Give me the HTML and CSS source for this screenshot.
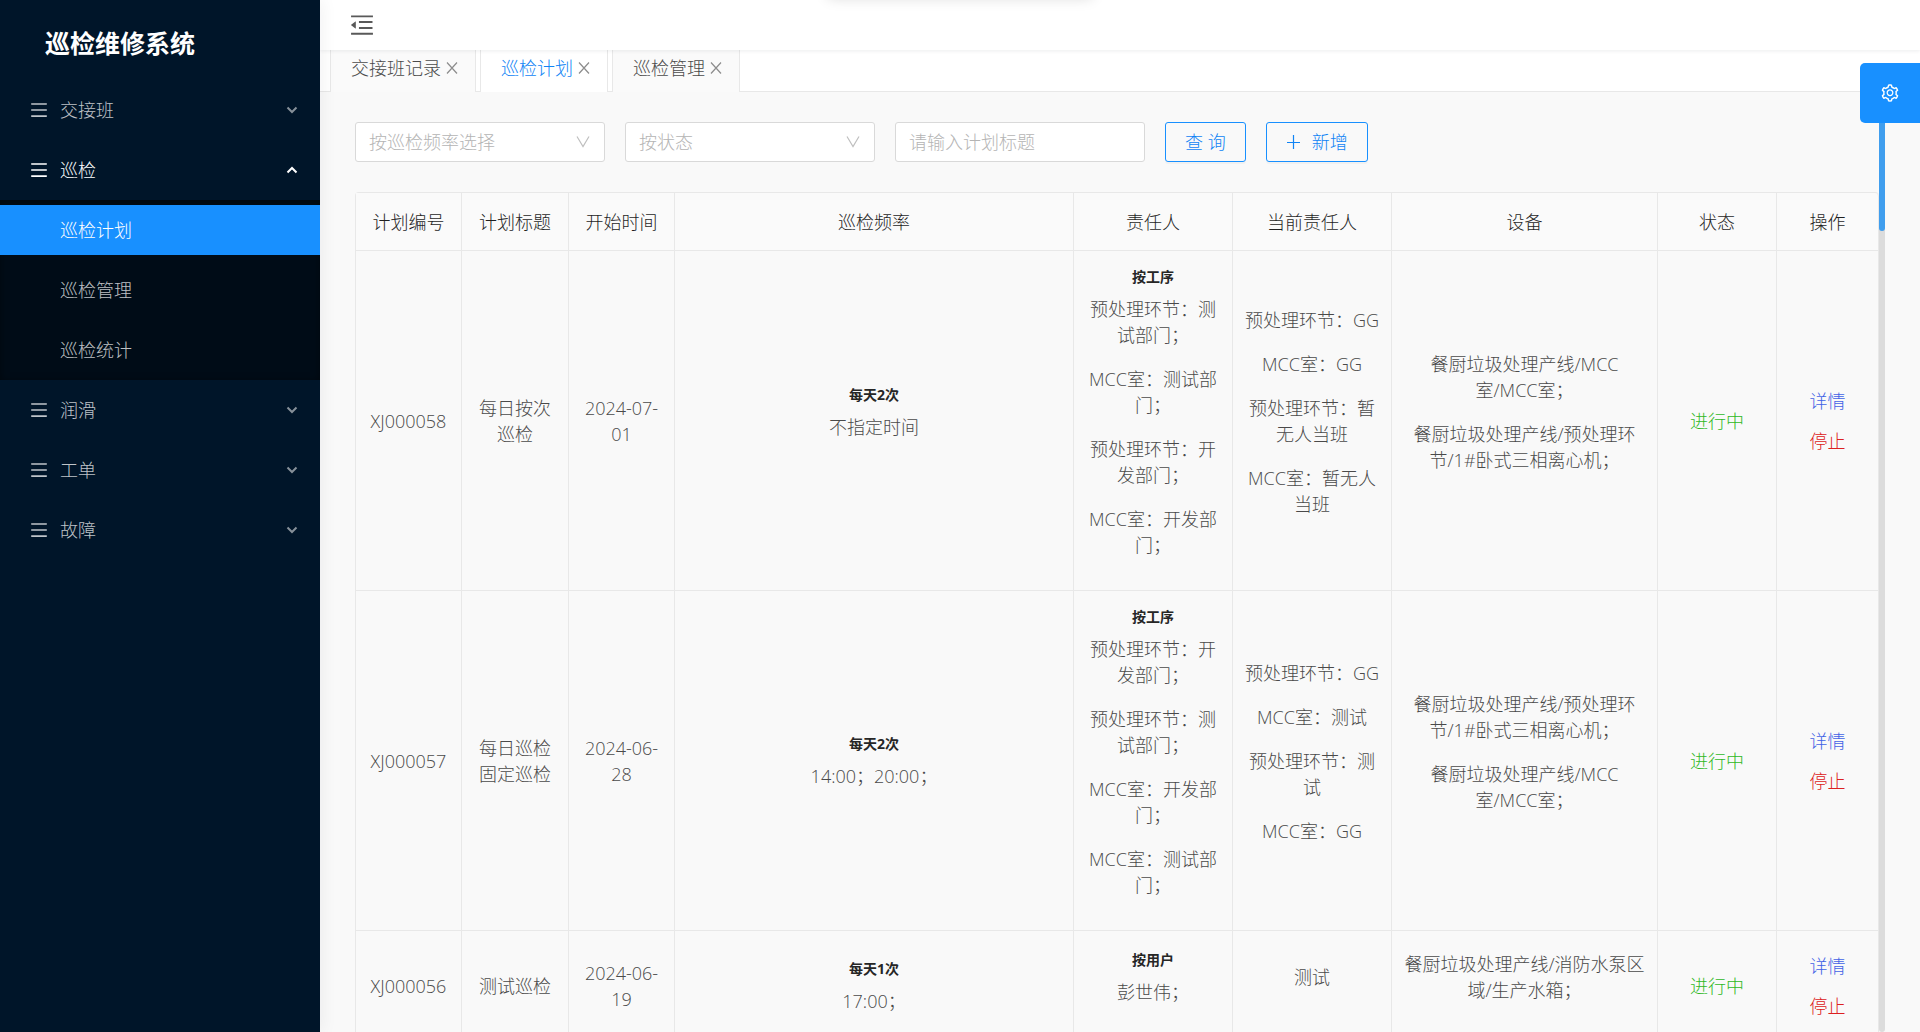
FILE: index.html
```html
<!DOCTYPE html>
<html lang="zh-CN">
<head>
    <meta charset="UTF-8">
    <meta name="viewport" content="width=device-width, initial-scale=1.0">
    <title>巡检维修系统</title>
    <link rel="stylesheet" href="styles.css">
</head>
<body>
    <svg class="sprite" aria-hidden="true">
        <symbol id="icon-menu" viewBox="0 0 1024 1024">
            <path d="M904 160H120c-4.4 0-8 3.6-8 8v64c0 4.4 3.6 8 8 8h784c4.4 0 8-3.6 8-8v-64c0-4.4-3.6-8-8-8zm0 624H120c-4.4 0-8 3.6-8 8v64c0 4.4 3.6 8 8 8h784c4.4 0 8-3.6 8-8v-64c0-4.4-3.6-8-8-8zm0-312H120c-4.4 0-8 3.6-8 8v64c0 4.4 3.6 8 8 8h784c4.4 0 8-3.6 8-8v-64c0-4.4-3.6-8-8-8z"/>
        </symbol>
        <symbol id="icon-fold" viewBox="0 0 1024 1024">
            <path d="M408 442h480c4.4 0 8-3.6 8-8v-56c0-4.4-3.6-8-8-8H408c-4.4 0-8 3.6-8 8v56c0 4.4 3.6 8 8 8zm-8 204c0 4.4 3.6 8 8 8h480c4.4 0 8-3.6 8-8v-56c0-4.4-3.6-8-8-8H408c-4.4 0-8 3.6-8 8v56zm504-486H120c-4.4 0-8 3.6-8 8v56c0 4.4 3.6 8 8 8h784c4.4 0 8-3.6 8-8v-56c0-4.4-3.6-8-8-8zm0 632H120c-4.4 0-8 3.6-8 8v56c0 4.4 3.6 8 8 8h784c4.4 0 8-3.6 8-8v-56c0-4.4-3.6-8-8-8zM115.4 518.9L271.7 642c5.8 4.6 14.4.5 14.4-6.9V388.9c0-7.4-8.5-11.5-14.4-6.9L115.4 505.1a8.74 8.74 0 0 0 0 13.8z"/>
        </symbol>
        <symbol id="icon-arrow" viewBox="0 0 12 12">
            <path d="M1.5 3.5L6 8l4.5-4.500" fill="none" stroke="currentColor" stroke-width="2"/>
        </symbol>
        <symbol id="icon-down" viewBox="0 0 14 14">
            <path d="M1 1.5l6 10 6-10" fill="none" stroke="currentColor" stroke-width="1.2"/>
        </symbol>
        <symbol id="icon-close" viewBox="0 0 12 12">
            <path d="M1 .5l10 11M11 .5l-10 11" fill="none" stroke="currentColor" stroke-width="1.2"/>
        </symbol>
        <symbol id="icon-plus" viewBox="0 0 14 14">
            <path d="M7.5 0v14M1 7.5h13" fill="none" stroke="currentColor" stroke-width="1.2"/>
        </symbol>
        <symbol id="icon-setting" viewBox="0 0 1024 1024">
            <path d="M924.8 625.7l-65.5-56c3.1-19 4.7-38.4 4.7-57.8s-1.6-38.8-4.7-57.8l65.5-56a32.03 32.03 0 0 0 9.3-35.2l-.9-2.6a443.74 443.74 0 0 0-79.7-137.9l-1.8-2.1a32.12 32.12 0 0 0-35.1-9.5l-81.3 28.9c-30-24.6-63.5-44-99.7-57.6l-15.7-85a32.05 32.05 0 0 0-25.8-25.7l-2.7-.5c-52.1-9.4-106.9-9.4-159 0l-2.7.5a32.05 32.05 0 0 0-25.8 25.7l-15.8 85.4a351.86 351.86 0 0 0-99 57.4l-81.9-29.1a32 32 0 0 0-35.1 9.5l-1.8 2.1a446.02 446.02 0 0 0-79.7 137.9l-.9 2.6c-4.5 12.5-.8 26.5 9.3 35.2l66.3 56.6c-3.1 18.8-4.6 38-4.6 57.1 0 19.2 1.5 38.4 4.6 57.1L99 625.5a32.03 32.03 0 0 0-9.3 35.2l.9 2.6c18.1 50.4 44.9 96.9 79.7 137.9l1.8 2.1a32.12 32.12 0 0 0 35.1 9.5l81.9-29.1c29.8 24.5 63.1 43.9 99 57.4l15.8 85.4a32.05 32.05 0 0 0 25.8 25.7l2.7.5a449.4 449.4 0 0 0 159 0l2.7-.5a32.05 32.05 0 0 0 25.8-25.7l15.7-85a350 350 0 0 0 99.7-57.6l81.3 28.9a32 32 0 0 0 35.1-9.5l1.8-2.1c34.8-41.1 61.6-87.5 79.7-137.9l.9-2.6c4.5-12.3.8-26.3-9.3-35zM788.3 465.9c2.5 15.1 3.8 30.6 3.8 46.1s-1.3 31-3.8 46.1l-6.6 40.1 74.7 63.9a370.03 370.03 0 0 1-42.6 73.6L721 702.8l-31.4 25.8c-23.9 19.6-50.5 35-79.3 45.8l-38.1 14.3-17.9 97a377.5 377.5 0 0 1-85 0l-17.9-97.2-37.8-14.5c-28.5-10.8-55-26.2-78.7-45.7l-31.4-25.9-93.4 33.2c-17-22.9-31.2-47.6-42.6-73.6l75.5-64.5-6.5-40c-2.4-14.9-3.7-30.3-3.7-45.5 0-15.3 1.2-30.6 3.7-45.5l6.5-40-75.5-64.5c11.3-26.1 25.6-50.7 42.6-73.6l93.4 33.2 31.4-25.9c23.7-19.5 50.2-34.9 78.7-45.7l37.9-14.3 17.9-97.2c28.1-3.2 56.8-3.2 85 0l17.9 97 38.1 14.3c28.7 10.8 55.4 26.2 79.3 45.8l31.4 25.8 92.8-32.9c17 22.9 31.2 47.6 42.6 73.6L781.8 426l6.5 39.9zM512 326c-97.2 0-176 78.8-176 176s78.8 176 176 176 176-78.8 176-176-78.8-176-176-176zm79.2 255.2A111.6 111.6 0 0 1 512 614c-29.9 0-58-11.7-79.2-32.8A111.6 111.6 0 0 1 400 502c0-29.9 11.7-58 32.8-79.2C454 401.6 482.1 390 512 390c29.9 0 58 11.6 79.2 32.8A111.6 111.6 0 0 1 624 502c0 29.9-11.7 58-32.8 79.2z"/>
        </symbol>
    </svg>

    <div class="layout">
        <aside class="sider">
            <h1 class="logo">巡检维修系统</h1>
            <ul class="menu">
                <li>
                    <a href="#" class="menu-item"><svg class="menu-icon"><use href="#icon-menu"/></svg>交接班<svg class="menu-arrow"><use href="#icon-arrow"/></svg></a>
                </li>
                <li>
                    <a href="#" class="menu-item open"><svg class="menu-icon"><use href="#icon-menu"/></svg>巡检<svg class="menu-arrow"><use href="#icon-arrow"/></svg></a>
                    <ul class="submenu">
                        <li><a href="#" class="menu-item active">巡检计划</a></li>
                        <li><a href="#" class="menu-item">巡检管理</a></li>
                        <li><a href="#" class="menu-item">巡检统计</a></li>
                    </ul>
                </li>
                <li>
                    <a href="#" class="menu-item"><svg class="menu-icon"><use href="#icon-menu"/></svg>润滑<svg class="menu-arrow"><use href="#icon-arrow"/></svg></a>
                </li>
                <li>
                    <a href="#" class="menu-item"><svg class="menu-icon"><use href="#icon-menu"/></svg>工单<svg class="menu-arrow"><use href="#icon-arrow"/></svg></a>
                </li>
                <li>
                    <a href="#" class="menu-item"><svg class="menu-icon"><use href="#icon-menu"/></svg>故障<svg class="menu-arrow"><use href="#icon-arrow"/></svg></a>
                </li>
            </ul>
        </aside>

        <div class="main">
            <header class="header">
                <button class="trigger" aria-label="收起菜单"><svg><use href="#icon-fold"/></svg></button>
            </header>

            <nav class="tabs">
                <div class="tab"><a href="#">交接班记录</a><button class="tab-close" aria-label="关闭"><svg><use href="#icon-close"/></svg></button></div>
                <div class="tab active"><a href="#">巡检计划</a><button class="tab-close" aria-label="关闭"><svg><use href="#icon-close"/></svg></button></div>
                <div class="tab"><a href="#">巡检管理</a><button class="tab-close" aria-label="关闭"><svg><use href="#icon-close"/></svg></button></div>
            </nav>

            <div class="content">
                <form class="filters">
                    <div class="select">
                        <select aria-label="巡检频率">
                            <option>按巡检频率选择</option>
                        </select>
                        <svg><use href="#icon-down"/></svg>
                    </div>
                    <div class="select">
                        <select aria-label="状态">
                            <option>按状态</option>
                        </select>
                        <svg><use href="#icon-down"/></svg>
                    </div>
                    <input type="text" class="input" placeholder="请输入计划标题" aria-label="计划标题">
                    <button type="button" class="btn">查 询</button>
                    <button type="button" class="btn"><svg><use href="#icon-plus"/></svg>新增</button>
                </form>

                <table class="table">
                    <colgroup>
                        <col class="col-id">
                        <col class="col-title">
                        <col class="col-date">
                        <col>
                        <col class="col-person">
                        <col class="col-person">
                        <col class="col-device">
                        <col class="col-status">
                        <col class="col-action">
                    </colgroup>
                    <thead>
                        <tr>
                            <th>计划编号</th>
                            <th>计划标题</th>
                            <th>开始时间</th>
                            <th>巡检频率</th>
                            <th>责任人</th>
                            <th>当前责任人</th>
                            <th>设备</th>
                            <th>状态</th>
                            <th>操作</th>
                        </tr>
                    </thead>
                    <tbody>
                        <tr>
                            <td>XJ000058</td>
                            <td>每日按次巡检</td>
                            <td>2024-07-01</td>
                            <td>
                                <h4>每天2次</h4>
                                <p>不指定时间</p>
                            </td>
                            <td>
                                <h4>按工序</h4>
                                <p>预处理环节：测试部门；</p>
                                <p>MCC室：测试部门；</p>
                                <p>预处理环节：开发部门；</p>
                                <p>MCC室：开发部门；</p>
                            </td>
                            <td>
                                <p>预处理环节：GG</p>
                                <p>MCC室：GG</p>
                                <p>预处理环节：暂无人当班</p>
                                <p>MCC室：暂无人当班</p>
                            </td>
                            <td>
                                <p>餐厨垃圾处理产线/MCC室/MCC室；</p>
                                <p>餐厨垃圾处理产线/预处理环节/1#卧式三相离心机；</p>
                            </td>
                            <td class="running">进行中</td>
                            <td>
                                <a href="#" class="action">详情</a>
                                <a href="#" class="action stop">停止</a>
                            </td>
                        </tr>
                        <tr>
                            <td>XJ000057</td>
                            <td>每日巡检固定巡检</td>
                            <td>2024-06-28</td>
                            <td>
                                <h4>每天2次</h4>
                                <span>14:00；20:00；</span>
                            </td>
                            <td>
                                <h4>按工序</h4>
                                <p>预处理环节：开发部门；</p>
                                <p>预处理环节：测试部门；</p>
                                <p>MCC室：开发部门；</p>
                                <p>MCC室：测试部门；</p>
                            </td>
                            <td>
                                <p>预处理环节：GG</p>
                                <p>MCC室：测试</p>
                                <p>预处理环节：测试</p>
                                <p>MCC室：GG</p>
                            </td>
                            <td>
                                <p>餐厨垃圾处理产线/预处理环节/1#卧式三相离心机；</p>
                                <p>餐厨垃圾处理产线/MCC室/MCC室；</p>
                            </td>
                            <td class="running">进行中</td>
                            <td>
                                <a href="#" class="action">详情</a>
                                <a href="#" class="action stop">停止</a>
                            </td>
                        </tr>
                        <tr>
                            <td>XJ000056</td>
                            <td>测试巡检</td>
                            <td>2024-06-19</td>
                            <td>
                                <h4>每天1次</h4>
                                <span>17:00；</span>
                            </td>
                            <td>
                                <h4>按用户</h4>
                                <p>彭世伟；</p>
                            </td>
                            <td>
                                <p>测试</p>
                            </td>
                            <td>
                                <p>餐厨垃圾处理产线/消防水泵区域/生产水箱；</p>
                            </td>
                            <td class="running">进行中</td>
                            <td>
                                <a href="#" class="action">详情</a>
                                <a href="#" class="action stop">停止</a>
                            </td>
                        </tr>
                    </tbody>
                </table>
                <div class="scrollbar"><div class="scrollbar-thumb"></div></div>
            </div>
        </div>
    </div>

    <div class="message"></div>
    <button class="setting" aria-label="设置"><svg><use href="#icon-setting"/></svg></button>
</body>
</html>
```

FILE: styles.css
```css
* {
    box-sizing: border-box;
}
body {
    margin: 0;
    font-family: "Open Sans", "Noto Sans CJK SC", sans-serif;
    font-size: 18px;
    font-weight: 300;
    line-height: 26px;
    color: #4a4a4a;
    background-color: #f9f9f9;
}
a {
    color: inherit;
    text-decoration: none;
}
button, input, select {
    font: inherit;
}
button {
    padding: 0;
    border: none;
    background: none;
    cursor: pointer;
}
svg {
    fill: currentColor;
    flex: none;
}
.sprite {
    display: none;
}
.layout {
    display: flex;
    height: 100vh;
    overflow: hidden;
}

/* sidebar */
.sider {
    flex: none;
    width: 320px;
    background-color: #001529;
    box-shadow: 2px 0 16px rgba(0, 21, 41, 0.06);
    z-index: 2;
}
.logo {
    margin: 0;
    height: 80px;
    padding: 8px 0 0 45px;
    font-size: 25px;
    font-weight: 700;
    line-height: 70px;
    color: #fff;
}
.menu, .submenu {
    list-style: none;
    margin: 0;
    padding: 0;
}
.menu li {
    overflow: hidden;
}
.menu-item {
    display: flex;
    align-items: center;
    height: 50px;
    margin: 5px 0;
    padding: 0 22px 0 29px;
    color: rgba(255, 255, 255, 0.75);
}
.menu-icon {
    width: 20px;
    height: 20px;
    margin-right: 11px;
}
.menu-arrow {
    width: 12px;
    height: 12px;
    margin-left: auto;
    opacity: 0.7;
}
.menu-item.open {
    color: #fff;
}
.menu-item.open .menu-arrow {
    transform: rotate(180deg);
    opacity: 1;
}
.submenu {
    background-color: #000c17;
    box-shadow: inset 0 2px 8px rgba(0, 0, 0, 0.45);
}
.submenu .menu-item {
    padding-left: 60px;
}
.submenu .menu-item.active {
    color: #fff;
    background-color: #1890ff;
}

/* header and tabs */
.main {
    flex: 1;
    min-width: 0;
    display: flex;
    flex-direction: column;
}
.header {
    flex: none;
    display: flex;
    align-items: center;
    height: 50px;
    padding: 0 28px;
    background-color: #fff;
    box-shadow: 0 1px 4px rgba(0, 21, 41, 0.08);
    z-index: 1;
}
.trigger {
    display: flex;
    color: #595959;
}
.trigger svg {
    width: 28px;
    height: 28px;
}
.tabs {
    flex: none;
    display: flex;
    gap: 4px;
    height: 42px;
    padding-left: 10px;
    background-color: #fff;
    border-bottom: 1px solid #e8e8e8;
}
.tab {
    display: flex;
    align-items: center;
    gap: 5px;
    height: 42px;
    padding: 0 17px 6px 20px;
    border: 1px solid #e8e8e8;
    border-width: 0 1px;
    background-color: #fafafa;
}
.tab.active {
    background-color: #fff;
}
.tab.active a {
    color: #1084f5;
}
.tab-close {
    display: flex;
    color: #8c8c8c;
}
.tab-close svg {
    width: 12px;
    height: 12px;
}

/* content */
.content {
    position: relative;
    flex: 1;
    min-height: 0;
    padding: 30px 41px 0 35px;
}
.filters {
    display: flex;
    gap: 20px;
    margin-bottom: 30px;
}
.select {
    position: relative;
    width: 250px;
}
.select select, .input {
    width: 250px;
    height: 40px;
    padding: 0 13px;
    border: 1px solid #d9d9d9;
    border-radius: 3px;
    background-color: #fff;
}
.select select {
    appearance: none;
    color: #b4b4b4;
}
.select svg {
    position: absolute;
    top: 13px;
    right: 15px;
    width: 14px;
    height: 14px;
    color: #bfbfbf;
    pointer-events: none;
}
.input::placeholder {
    color: #b4b4b4;
}
.btn {
    display: flex;
    align-items: center;
    gap: 12px;
    height: 40px;
    padding: 0 19px;
    border: 1px solid #1890ff;
    border-radius: 3px;
    color: #1084f5;
    box-shadow: 0 2px 0 rgba(0, 0, 0, 0.03);
}
.btn svg {
    width: 14px;
    height: 14px;
}

/* plan table */
.table {
    width: 100%;
    table-layout: fixed;
    border-collapse: separate;
    border-spacing: 0;
    border: 1px solid #e8e8e8;
    border-width: 1px 0 0 1px;
    border-radius: 4px 4px 0 0;
}
.table th, .table td {
    padding: 15px 10px 14px;
    border: 1px solid #e8e8e8;
    border-width: 0 1px 1px 0;
    text-align: center;
    vertical-align: middle;
}
.table th {
    height: 58px;
    padding: 14px 10px;
    font-weight: 300;
    color: #1f1f1f;
    background-color: #fafafa;
}
.table th:last-child {
    border-top-right-radius: 4px;
}
.table h4 {
    margin: 0 0 8px;
    font-size: 14px;
    font-weight: 700;
    line-height: 22px;
    color: #262626;
}
.table p {
    margin: 0 0 18px;
}
.col-id, .col-date {
    width: 106px;
}
.col-title {
    width: 107px;
}
.col-person {
    width: 159px;
}
.col-device {
    width: 266px;
}
.col-status {
    width: 119px;
}
.col-action {
    width: 102px;
}
.table .running {
    color: #2fb81f;
}
.action {
    display: block;
    line-height: 40px;
    color: #4163e6;
}
.action.stop {
    color: #dc2020;
}
.scrollbar {
    position: absolute;
    top: 0;
    right: 35px;
    bottom: 0;
    width: 6px;
    border-radius: 3px;
    background-color: #dcdcdc;
}
.scrollbar-thumb {
    height: 139px;
    border-radius: 3px;
    background-color: #409eee;
}

/* floating parts */
.message {
    position: absolute;
    top: -42px;
    left: 50%;
    width: 264px;
    height: 40px;
    transform: translateX(-50%);
    box-shadow: 0 0 14px rgba(0, 0, 0, 0.15);
    z-index: 3;
}
.setting {
    position: absolute;
    top: 63px;
    right: 0;
    display: flex;
    align-items: center;
    justify-content: center;
    width: 60px;
    height: 60px;
    border-radius: 5px 0 0 5px;
    color: #fff;
    background-color: #1890ff;
    z-index: 3;
}
.setting svg {
    width: 20px;
    height: 20px;
}
```
